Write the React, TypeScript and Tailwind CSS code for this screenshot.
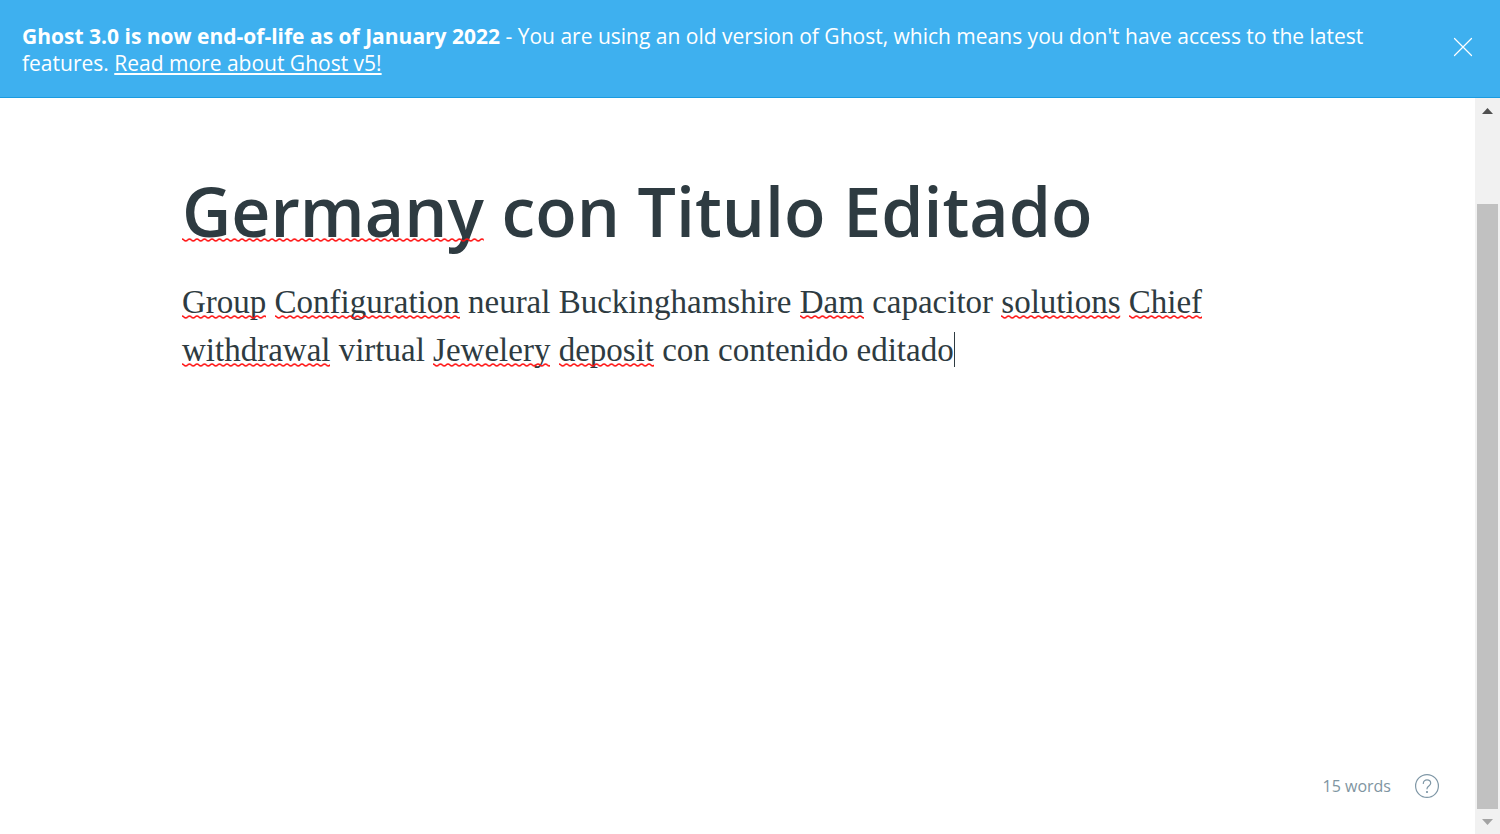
import React, { useId } from "react";

function Misspelled({ children, line }: { children: React.ReactNode; line: string }) {
  const id = useId();
  return (
    <span className="relative inline-block">
      {children}
      <svg className={"pointer-events-none absolute left-0 h-1 w-full " + line} aria-hidden="true">
        <defs>
          <pattern id={id} width="7.5" height="4" patternUnits="userSpaceOnUse">
            <path d="M-3.750 3C-1.875 3 -1.875 1 0 1S1.875 3 3.750 3S5.625 1 7.500 1S9.375 3 11.250 3" fill="none" stroke="#ff1010" strokeWidth="1.500" />
          </pattern>
        </defs>
        <rect width="100%" height="4" fill={`url(#${id})`} />
      </svg>
    </span>
  );
}

function Word({ children }: { children: React.ReactNode }) {
  return <Misspelled line="bottom-[7px]">{children}</Misspelled>;
}

function Scrollbar() {
  return (
    <div className="flex w-[25px] shrink-0 flex-col bg-[#f1f1f1]">
      <button aria-label="Scroll up" className="flex h-[25px] items-center justify-center">
        <svg className="h-[6px] w-[11px]" viewBox="0 0 11 6" fill="#505050"><path d="M0 6L5.500 0L11 6z" /></svg>
      </button>
      <div className="flex flex-1 flex-col px-[2px] pt-[81px]">
        <div className="flex-1 bg-[#c1c1c1]" />
      </div>
      <button aria-label="Scroll down" className="flex h-[25px] items-center justify-center">
        <svg className="h-[6px] w-[11px]" viewBox="0 0 11 6" fill="#a3a3a3"><path d="M0 0L5.500 6L11 0z" /></svg>
      </button>
    </div>
  );
}

export default function App() {
  return (
    <div className="flex h-screen flex-col overflow-hidden bg-white">
      <aside className="flex items-center justify-between border-b border-[#1a9be0] bg-[#3eb0ef] pt-[23px] pr-[27px] pb-5 pl-[22px] font-['Open_Sans',sans-serif] text-[21px] leading-[27px] text-white">
        <p className="max-w-[1370px]">
          <strong className="font-bold">Ghost 3.0 is now end-of-life as of January 2022</strong> - You are using an old version of Ghost, which means you don't have access to the latest features.{" "}
          <a href="#v5" className="underline decoration-2 underline-offset-2">Read more about Ghost v5!</a>
        </p>
        <button aria-label="Close" className="mb-[6px] shrink-0">
          <svg className="h-5 w-5" viewBox="0 0 20 20" stroke="white" strokeWidth="1.2" fill="none" strokeLinecap="round"><path d="M1.500 1.500l17 17M18.500 1.500l-17 17" /></svg>
        </button>
      </aside>
      <div className="flex min-h-0 flex-1">
        <main className="flex min-w-0 flex-1 flex-col justify-between">
          <article className="px-[182px] pt-[71px] text-[#2e3b41]">
            <h1 className="font-['Open_Sans',sans-serif] text-[68px] leading-[84px] font-semibold"><Misspelled line="bottom-[11px]">Germany</Misspelled> con Titulo Editado</h1>
            <p className="mt-[25px] font-['Liberation_Serif',serif] text-[33px] leading-[48px]">
              <Word>Group</Word> <Word>Configuration</Word> neural Buckinghamshire <Word>Dam</Word> capacitor <Word>solutions</Word> <Word>Chief</Word> <Word>withdrawal</Word> virtual <Word>Jewelery</Word> <Word>deposit</Word> con contenido editado
              <span className="inline-block h-[35px] w-px bg-[#2e3b41] align-[-6px]" />
            </p>
          </article>
          <footer className="flex items-center justify-end gap-6 pr-9 pb-9 font-['Open_Sans',sans-serif] text-base leading-6 text-[#8095a1]">
            <span>15 words</span>
            <button aria-label="Help">
              <svg className="h-6 w-6" viewBox="0 0 24 24" fill="none" stroke="#7f97a6" strokeWidth="1.2" strokeLinecap="round"><circle cx="12" cy="12" r="11.400" /><path d="M8.300 9.400C8.300 7.400 9.900 5.900 12 5.900S15.700 7.400 15.700 9.300C15.700 12 12 12 12 14.800" /><circle cx="12" cy="18" r=".5" fill="#7f97a6" /></svg>
            </button>
          </footer>
        </main>
        <Scrollbar />
      </div>
    </div>
  );
}
